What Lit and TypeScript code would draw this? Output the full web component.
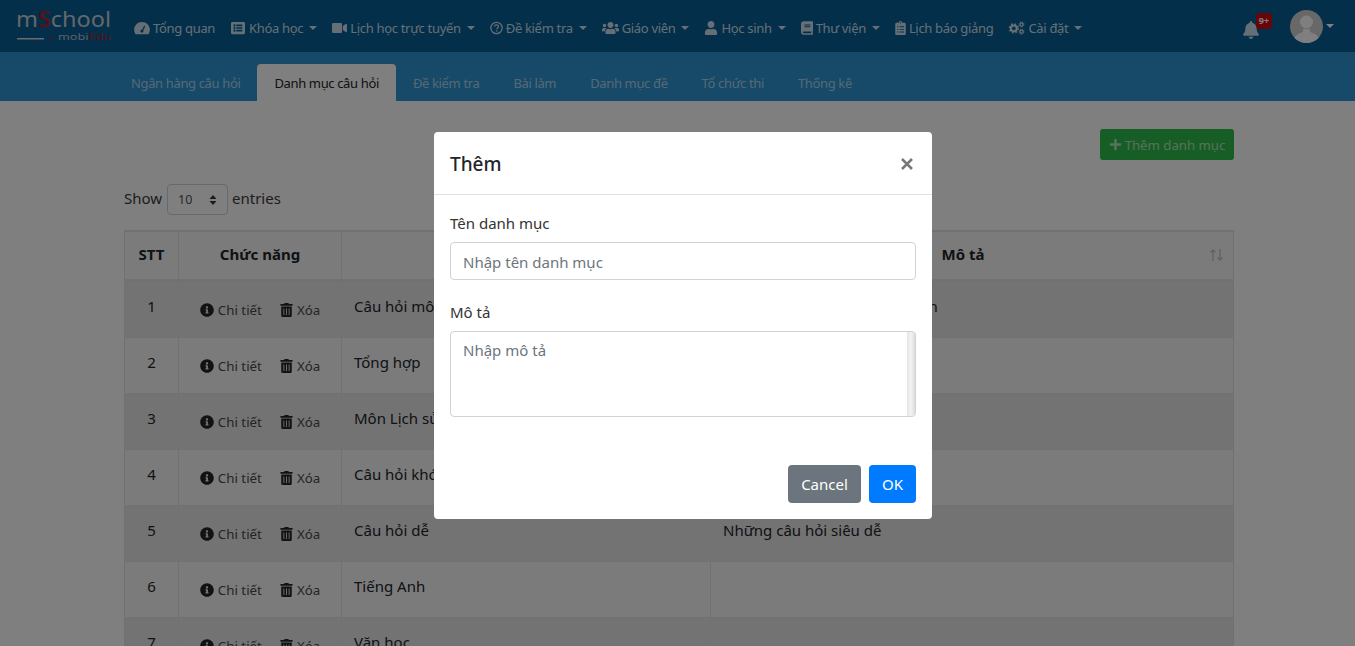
import { LitElement, html, css, svg } from "lit";
import { customElement } from "lit/decorators.js";

const I: Record<string, [number, unknown]> = {
  gauge: [576, svg`<path fill-rule="evenodd" d="M288 32C129 32 0 161 0 320c0 53 14 102 39 145 6 10 16 15 27 15h444c11 0 21-5 27-15 25-43 39-92 39-145 0-159-129-288-288-288zm40 300c22 22 22 58 0 80s-58 22-80 0-22-58 0-80c14-14 33-19 51-16l55-125c5-12 19-18 32-13s18 19 13 32l-55 122c-4-2-12 0-16 0z"/>`],
  list: [512, svg`<path d="M464 480H48c-26.51 0-48-21.49-48-48V80c0-26.51 21.49-48 48-48h416c26.51 0 48 21.49 48 48v352c0 26.51-21.49 48-48 48zM128 120c-22.091 0-40 17.909-40 40s17.909 40 40 40 40-17.909 40-40-17.909-40-40-40zm0 96c-22.091 0-40 17.909-40 40s17.909 40 40 40 40-17.909 40-40-17.909-40-40-40zm0 96c-22.091 0-40 17.909-40 40s17.909 40 40 40 40-17.909 40-40-17.909-40-40-40zm288-136v-32c0-6.627-5.373-12-12-12H204c-6.627 0-12 5.373-12 12v32c0 6.627 5.373 12 12 12h200c6.627 0 12-5.373 12-12zm0 96v-32c0-6.627-5.373-12-12-12H204c-6.627 0-12 5.373-12 12v32c0 6.627 5.373 12 12 12h200c6.627 0 12-5.373 12-12zm0 96v-32c0-6.627-5.373-12-12-12H204c-6.627 0-12 5.373-12 12v32c0 6.627 5.373 12 12 12h200c6.627 0 12-5.373 12-12z"/>`],
  video: [576, svg`<path d="M336.2 64H47.8C21.4 64 0 85.4 0 111.8v288.4C0 426.6 21.4 448 47.8 448h288.4c26.4 0 47.8-21.4 47.8-47.8V111.8c0-26.4-21.4-47.8-47.8-47.8zm189.4 37.7L416 177.3v157.4l109.6 75.5c21.2 14.6 50.4-.3 50.4-25.8V127.5c0-25.4-29.1-40.4-50.4-25.8z"/>`],
  question: [512, svg`<circle cx="256" cy="256" r="222" fill="none" stroke="currentColor" stroke-width="50"/><path d="M176 198c6-44 40-68 82-68 44 0 78 28 78 66 0 58-72 56-72 112" fill="none" stroke="currentColor" stroke-width="48"/><circle cx="262" cy="376" r="32"/>`],
  users: [640, svg`<path d="M96 224c35.3 0 64-28.7 64-64s-28.7-64-64-64-64 28.7-64 64 28.7 64 64 64zm448 0c35.3 0 64-28.7 64-64s-28.7-64-64-64-64 28.7-64 64 28.7 64 64 64zm32 32h-64c-17.6 0-33.5 7.1-45.1 18.6 40.3 22.1 68.9 62 75.1 109.4h66c17.7 0 32-14.3 32-32v-32c0-35.3-28.7-64-64-64zm-256 0c61.9 0 112-50.1 112-112S381.9 32 320 32 208 82.1 208 144s50.1 112 112 112zm76.8 32h-8.3c-20.8 10-43.9 16-68.5 16s-47.6-6-68.5-16h-8.3C179.6 288 128 339.6 128 403.2V432c0 26.5 21.5 48 48 48h288c26.5 0 48-21.5 48-48v-28.8c0-63.6-51.6-115.2-115.2-115.2zm-223.7-13.4C161.5 263.1 145.6 256 128 256H64c-35.3 0-64 28.7-64 64v32c0 17.7 14.3 32 32 32h65.9c6.3-47.4 34.9-87.3 75.2-109.4z"/>`],
  user: [448, svg`<path d="M224 256c70.7 0 128-57.3 128-128S294.7 0 224 0 96 57.3 96 128s57.3 128 128 128zm89.6 32h-16.7c-22.2 10.2-46.9 16-72.9 16s-50.6-5.8-72.9-16h-16.7C60.2 288 0 348.2 0 422.4V464c0 26.5 21.5 48 48 48h352c26.5 0 48-21.5 48-48v-41.6c0-74.2-60.2-134.4-134.4-134.4z"/>`],
  book: [448, svg`<path d="M448 360V24c0-13.3-10.7-24-24-24H96C43 0 0 43 0 96v320c0 53 43 96 96 96h328c13.3 0 24-10.7 24-24v-16c0-7.5-3.5-14.3-8.9-18.7-4.2-15.4-4.2-59.3 0-74.7 5.4-4.3 8.9-11.1 8.9-18.6zM128 134c0-3.3 2.7-6 6-6h212c3.3 0 6 2.7 6 6v20c0 3.3-2.7 6-6 6H134c-3.3 0-6-2.7-6-6v-20zm0 64c0-3.3 2.7-6 6-6h212c3.3 0 6 2.7 6 6v20c0 3.3-2.7 6-6 6H134c-3.3 0-6-2.7-6-6v-20zm253.4 250H96c-17.7 0-32-14.3-32-32 0-17.6 14.4-32 32-32h285.4c-1.9 17.1-1.9 46.9 0 64z"/>`],
  clip: [384, svg`<path d="M336 64h-80c0-35.3-28.7-64-64-64s-64 28.7-64 64H48C21.5 64 0 85.5 0 112v352c0 26.5 21.5 48 48 48h288c26.5 0 48-21.5 48-48V112c0-26.5-21.5-48-48-48zM96 424c-13.3 0-24-10.7-24-24s10.7-24 24-24 24 10.7 24 24-10.7 24-24 24zm0-96c-13.3 0-24-10.7-24-24s10.7-24 24-24 24 10.7 24 24-10.7 24-24 24zm0-96c-13.3 0-24-10.7-24-24s10.7-24 24-24 24 10.7 24 24-10.7 24-24 24zm96-192c13.3 0 24 10.7 24 24s-10.7 24-24 24-24-10.7-24-24 10.7-24 24-24zm128 368c0 4.4-3.6 8-8 8H168c-4.4 0-8-3.6-8-8v-16c0-4.4 3.6-8 8-8h144c4.4 0 8 3.6 8 8v16zm0-96c0 4.4-3.6 8-8 8H168c-4.4 0-8-3.6-8-8v-16c0-4.4 3.6-8 8-8h144c4.4 0 8 3.6 8 8v16zm0-96c0 4.4-3.6 8-8 8H168c-4.4 0-8-3.6-8-8v-16c0-4.4 3.6-8 8-8h144c4.4 0 8 3.6 8 8v16z"/>`],
  cogs: [640, svg`<g fill="none" stroke="currentColor"><circle cx="220" cy="270" r="110" stroke-width="80"/><circle cx="220" cy="270" r="165" stroke-width="60" stroke-dasharray="64 66"/><circle cx="510" cy="125" r="58" stroke-width="46"/><circle cx="510" cy="125" r="92" stroke-width="36" stroke-dasharray="36 36"/><circle cx="510" cy="395" r="58" stroke-width="46"/><circle cx="510" cy="395" r="92" stroke-width="36" stroke-dasharray="36 36"/></g>`],
  bell: [448, svg`<path d="M224 512c35.32 0 63.97-28.65 63.97-64H160.03c0 35.35 28.65 64 63.97 64zm215.39-149.71c-19.32-20.76-55.47-51.99-55.47-154.29 0-77.7-54.48-139.9-127.94-155.16V32c0-17.67-14.32-32-31.98-32s-31.98 14.33-31.98 32v20.84C118.56 68.1 64.08 130.3 64.08 208c0 102.3-36.15 133.53-55.47 154.29-6 6.45-8.66 14.16-8.61 21.71.11 16.4 12.98 32 32.1 32h383.8c19.12 0 32-15.6 32.1-32 .05-7.55-2.61-15.27-8.61-21.71z"/>`],
  info: [512, svg`<path d="M256 8C119.043 8 8 119.083 8 256c0 136.997 111.043 248 248 248s248-111.003 248-248C504 119.083 392.957 8 256 8zm0 110c23.196 0 42 18.804 42 42s-18.804 42-42 42-42-18.804-42-42 18.804-42 42-42zm56 254c0 6.627-5.373 12-12 12h-88c-6.627 0-12-5.373-12-12v-24c0-6.627 5.373-12 12-12h12v-64h-12c-6.627 0-12-5.373-12-12v-24c0-6.627 5.373-12 12-12h64c6.627 0 12 5.373 12 12v100h12c6.627 0 12 5.373 12 12v24z"/>`],
  trash: [448, svg`<path d="M32 464a48 48 0 0 0 48 48h288a48 48 0 0 0 48-48V128H32zm272-256a16 16 0 0 1 32 0v224a16 16 0 0 1-32 0zm-96 0a16 16 0 0 1 32 0v224a16 16 0 0 1-32 0zm-96 0a16 16 0 0 1 32 0v224a16 16 0 0 1-32 0zM432 32H312l-9.4-18.7A24 24 0 0 0 281.1 0H166.8a23.72 23.72 0 0 0-21.4 13.3L136 32H16A16 16 0 0 0 0 48v32a16 16 0 0 0 16 16h416a16 16 0 0 0 16-16V48a16 16 0 0 0-16-16z"/>`],
  plus: [448, svg`<path d="M416 208H272V64c0-17.67-14.33-32-32-32h-32c-17.67 0-32 14.33-32 32v144H32c-17.67 0-32 14.33-32 32v32c0 17.67 14.33 32 32 32h144v144c0 17.67 14.33 32 32 32h32c17.67 0 32-14.33 32-32V304h144c17.67 0 32-14.33 32-32v-32c0-17.67-14.33-32-32-32z"/>`],
};

const icon = (n: string, cls = "") => html`<svg class="ic ${cls}" viewBox="0 0 ${I[n][0]} 512" fill="currentColor">${I[n][1]}</svg>`;

const NAV = [
  { i: "gauge", t: "Tổng quan", c: false, k: "w16" },
  { i: "list", t: "Khóa học", c: true, k: "w16" },
  { i: "video", t: "Lịch học trực tuyến", c: true, k: "w15" },
  { i: "question", t: "Đề kiểm tra", c: true, k: "w13" },
  { i: "users", t: "Giáo viên", c: true, k: "w17" },
  { i: "user", t: "Học sinh", c: true, k: "w14" },
  { i: "book", t: "Thư viện", c: true, k: "w12" },
  { i: "clip", t: "Lịch báo giảng", c: false, k: "w11" },
  { i: "cogs", t: "Cài đặt", c: true, k: "w17" },
];
const TABS = ["Ngân hàng câu hỏi", "Danh mục câu hỏi", "Đề kiểm tra", "Bài làm", "Danh mục đề", "Tổ chức thi", "Thống kê"];
const ROWS: [string, string][] = [
  ["Câu hỏi môn Toán", "Những câu hỏi thuộc môn Văn"],
  ["Tổng hợp", ""],
  ["Môn Lịch sử", ""],
  ["Câu hỏi khó", ""],
  ["Câu hỏi dễ", "Những câu hỏi siêu dễ"],
  ["Tiếng Anh", ""],
  ["Văn học", ""],
];

@customElement("app-root")
export class AppRoot extends LitElement {
  static styles = css`
    :host { display: block; position: relative; height: 646px; overflow: hidden; background: #fff; color: #212529;
      font-family: "Noto Sans", "Open Sans", sans-serif; font-size: 15px; line-height: 22px; }
    * { box-sizing: border-box; }
    .ic { display: block; height: 14px; flex: none; }
    .w16 { width: 16px; } .w15 { width: 15px; } .w13 { width: 13px; } .w17 { width: 17px; } .w14 { width: 14px; } .w12 { width: 12px; } .w11 { width: 11px; }

    .nav { height: 52px; background: #065f97; color: #fff; display: flex; align-items: center; padding: 0 21px 0 16px; }
    .logo { width: 95px; height: 40px; flex: none; display: block; margin-right: 23px; overflow: visible; }
    .logo text { font-family: "Noto Sans", sans-serif; }
    .items { display: flex; align-items: center; gap: 15px; font-size: 13px; letter-spacing: -.32px; color: rgba(255,255,255,.8); padding-top: 4px; }
    .item { display: flex; align-items: center; gap: 3px; white-space: nowrap; }
    .caret { width: 0; height: 0; border: 4px solid transparent; border-top-color: currentColor; border-bottom: 0; margin-left: 3px; flex: none; }
    .right { margin-left: auto; display: flex; align-items: center; color: rgba(255,255,255,.8); }
    .bell { position: relative; width: 16px; height: 18px; margin-right: 31px; margin-top: 8px; }
    .bell .ic { height: 18px; width: 16px; }
    .badge { position: absolute; left: 13px; top: -8px; width: 16px; height: 16px; border-radius: 4px; background: #cf0a12; color: #fff; font-size: 9px; line-height: 15px; font-weight: 700; text-align: center; letter-spacing: 0; }
    .avatar { width: 33px; height: 33px; border-radius: 50%; background: #d0d0d0; overflow: hidden; margin-right: 3px; display: block; }
    .avatar-caret { margin-left: 0; color: #fff; }

    .sub { height: 49px; background: #2f93d0; display: flex; align-items: flex-end; padding-left: 114px; font-size: 13px; letter-spacing: -.36px; }
    .tab { height: 37px; padding: 1px 17px 0; display: flex; align-items: center; color: rgba(255,255,255,.6); border-radius: 4px 4px 0 0; }
    .tab.on { background: #fff; color: #212529; }

    .main { padding: 28px 121px 0 124px; }
    .actions { display: flex; justify-content: flex-end; height: 31px; }
    .add { height: 31px; width: 134px; background: #2fba4c; color: rgba(255,255,255,.62); border-radius: 3px; display: flex; align-items: center; justify-content: center; gap: 3px; font-size: 13.2px; }
    .add .ic { height: 13px; width: 13px; }
    .len { display: flex; align-items: center; gap: 4px; margin-top: 24px; height: 31px; color: #3a3a3a; font-size: 15px; line-height: 28px; }
    .len > span { padding-bottom: 3px; }
    .show { width: 39px; }
    .sel { width: 61px; height: 31px; border: 1px solid #ced4da; border-radius: 4px; display: flex; align-items: center; justify-content: space-between; padding: 0 10px; font-size: 12.5px; color: #495057; }
    .sel svg { width: 8px; height: 12px; display: block; }

    .table { margin-top: 15px; border: 1px solid #dee2e6; border-top-width: 2px; display: grid; grid-template-columns: 54px 163px 369px 1fr; font-size: 15px; background: #f6f6f6; }
    .c { border-right: 1px solid #dee2e6; border-bottom: 1px solid #dee2e6; display: flex; align-items: center; padding: 0 12px; height: 56px; }
    .c:nth-child(4n) { border-right: 0; }
    .h { height: 50px; font-weight: 700; justify-content: center; color: #212529; border-bottom: 3px solid #dee2e6; position: relative; font-size: 15px; padding-bottom: 4px; }
    .h.desc { padding-right: 30px; }
    .sort { position: absolute; right: 9px; top: 16px; width: 15px; height: 14px; color: #c4c4c4; }
    .n { justify-content: center; padding-bottom: 7px; }
    .t { padding-bottom: 7px; }
    .s { background: #e6e6e6; }
    .acts { display: flex; justify-content: center; align-items: center; gap: 18px; font-size: 13.3px; color: #4a4a4a; padding: 0; }
    .act { display: flex; align-items: center; gap: 4px; }
    .act .ic { height: 14px; color: #212529; }
    .act .tr { width: 13px; }
    .act .in { width: 14px; }

    .back { position: absolute; inset: 0; background: rgba(0,0,0,.5); }
    .modal { position: absolute; left: 434px; top: 132px; width: 498px; height: 387px; background: #fff; border-radius: 4px; display: flex; flex-direction: column; }
    .mh { height: 63px; flex: none; border-bottom: 1px solid #dee2e6; display: flex; align-items: center; justify-content: space-between; padding: 1px 19px 0 16px; }
    .mt { font-size: 19px; font-weight: 500; color: #212529; }
    .x { width: 12px; height: 12px; display: block; color: #777; }
    .mb { padding: 17px 16px 0; flex: 1; display: flex; flex-direction: column; }
    .lb { font-size: 15px; color: #333; margin-bottom: 8px; line-height: 22px; }
    .inp { height: 38px; border: 1px solid #ced4da; border-radius: 4px; padding: 1px 12px 0; display: flex; align-items: center; color: #6c757d; margin-bottom: 21px; }
    .ta { height: 86px; border: 1px solid #ced4da; border-radius: 4px; padding: 7px 12px; color: #6c757d; position: relative; }
    .bar { position: absolute; right: 0; top: 0; bottom: 0; width: 8px; background: linear-gradient(90deg, #e6e6e6, #f2f2f2, #dcdcdc); }
    .mf { display: flex; justify-content: flex-end; gap: 8px; padding: 0 16px 16px; }
    .btn { height: 38px; border-radius: 4px; color: #fff; display: flex; align-items: center; justify-content: center; font-size: 15px; }
    .cancel { width: 73px; background: #6c757d; }
    .ok { width: 47px; background: #007bff; }
  `;

  render() {
    return html`
      <div class="nav">
        <svg class="logo" viewBox="0 0 95 40">
          <text x="0" y="21" font-size="21.5" fill="#c8ced2" textLength="95" lengthAdjust="spacingAndGlyphs">m<tspan fill="#b4202c" font-weight="600">S</tspan>chool</text>
          <rect x="1" y="32" width="27" height="1.5" fill="#d4d8dc"/>
          <rect x="32" y="33" width="5" height="1" fill="#b4202c"/>
          <text x="42" y="34" font-size="9.5" fill="#b8c0c6" textLength="53" lengthAdjust="spacingAndGlyphs">mobi<tspan fill="#b4202c">Edu</tspan></text>
        </svg>
        <div class="items">
          ${NAV.map((n) => html`<div class="item">${icon(n.i, n.k)}<span>${n.t}</span>${n.c ? html`<span class="caret"></span>` : ""}</div>`)}
        </div>
        <div class="right">
          <div class="bell">${icon("bell")}<span class="badge">9+</span></div>
          <svg class="avatar" viewBox="0 0 33 33"><circle cx="16.5" cy="12" r="6.5" fill="#fff"/><path d="M3 33c1-9 7-10 10-11v-3h7v3c3 1 9 2 10 11z" fill="#fff"/></svg>
          <span class="caret avatar-caret"></span>
        </div>
      </div>
      <div class="sub">
        ${TABS.map((t, i) => html`<div class="tab ${i === 1 ? "on" : ""}">${t}</div>`)}
      </div>
      <div class="main">
        <div class="actions"><div class="add">${icon("plus")}<span>Thêm danh mục</span></div></div>
        <div class="len">
          <span class="show">Show</span>
          <div class="sel"><span>10</span><svg viewBox="0 0 8 12" fill="#343a40"><path d="M4 1l3.5 4h-7zM4 11L.5 7h7z"/></svg></div>
          <span>entries</span>
        </div>
        <div class="table">
          <div class="c h">STT</div>
          <div class="c h">Chức năng</div>
          <div class="c h">Tên danh mục</div>
          <div class="c h desc">Mô tả
            <svg class="sort" viewBox="0 0 15 14" fill="none" stroke="currentColor" stroke-width="1.3"><path d="M4 13V2M1.5 4.5L4 2l2.5 2.5M11 1v11M8.5 9.5L11 12l2.5-2.5"/></svg>
          </div>
          ${ROWS.map((r, i) => {
            const s = i % 2 === 0 ? "s" : "";
            return html`
              <div class="c n ${s}">${i + 1}</div>
              <div class="c acts ${s}">
                <span class="act">${icon("info", "in")}Chi tiết</span>
                <span class="act">${icon("trash", "tr")}Xóa</span>
              </div>
              <div class="c t ${s}">${r[0]}</div>
              <div class="c t ${s}">${r[1]}</div>`;
          })}
        </div>
      </div>
      <div class="back"></div>
      <div class="modal">
        <div class="mh">
          <span class="mt">Thêm</span>
          <svg class="x" viewBox="0 0 12 12" stroke="currentColor" stroke-width="2.5" fill="none"><path d="M1 1l10 10M11 1L1 11"/></svg>
        </div>
        <div class="mb">
          <div class="lb">Tên danh mục</div>
          <div class="inp">Nhập tên danh mục</div>
          <div class="lb">Mô tả</div>
          <div class="ta">Nhập mô tả<span class="bar"></span></div>
        </div>
        <div class="mf">
          <div class="btn cancel">Cancel</div>
          <div class="btn ok">OK</div>
        </div>
      </div>
    `;
  }
}
